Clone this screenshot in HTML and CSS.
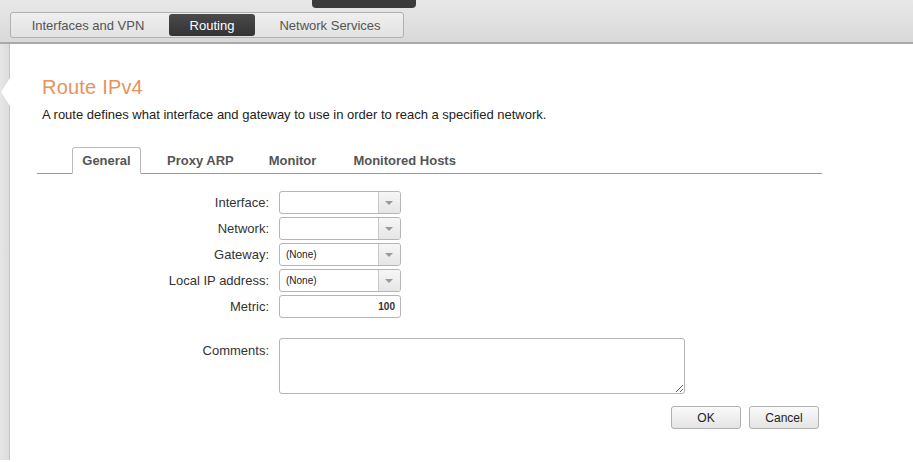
FILE: index.html
```html
<!DOCTYPE html>
<html lang="en">
<head>
    <meta charset="UTF-8">
    <title>Route IPv4</title>
    <link rel="stylesheet" href="styles.css">
</head>
<body>
    <div class="topbar">
        <div class="topbar-tab"></div>
        <div class="segments">
            <div class="segment">Interfaces and VPN</div>
            <div class="segment active">Routing</div>
            <div class="segment">Network Services</div>
        </div>
    </div>

    <div class="main">
        <div class="sidebar">
            <div class="pointer"></div>
        </div>

        <div class="content">
            <h1 class="title">Route IPv4</h1>
            <p class="desc">A route defines what interface and gateway to use in order to reach a specified network.</p>

            <div class="tabs">
                <div class="tab selected">General</div>
                <div class="tab">Proxy ARP</div>
                <div class="tab">Monitor</div>
                <div class="tab">Monitored Hosts</div>
            </div>

            <form class="form">
                <div class="row">
                    <label>Interface:</label>
                    <div class="combo"><span class="combo-value"></span><span class="combo-btn"></span></div>
                </div>
                <div class="row">
                    <label>Network:</label>
                    <div class="combo"><span class="combo-value"></span><span class="combo-btn"></span></div>
                </div>
                <div class="row">
                    <label>Gateway:</label>
                    <div class="combo"><span class="combo-value">(None)</span><span class="combo-btn"></span></div>
                </div>
                <div class="row">
                    <label>Local IP address:</label>
                    <div class="combo"><span class="combo-value">(None)</span><span class="combo-btn"></span></div>
                </div>
                <div class="row">
                    <label>Metric:</label>
                    <input class="field" type="text" value="100">
                </div>
                <div class="row comments">
                    <label>Comments:</label>
                    <textarea class="textarea"></textarea>
                </div>

                <div class="actions">
                    <button type="button" class="button">OK</button>
                    <button type="button" class="button">Cancel</button>
                </div>
            </form>
        </div>
    </div>
</body>
</html>
```

FILE: styles.css
```css
body {
    font-family: "Liberation Sans", Arial, sans-serif;
    margin: 0;
    padding: 0;
    background-color: #fff;
    color: #222;
    font-size: 13px;
}

.topbar {
    position: relative;
    height: 44px;
    background: linear-gradient(#e8e8e8, #d9d9d9);
    border-bottom: 2px solid #a9a9a9;
    padding: 12px 0 0 10px;
    box-sizing: border-box;
}

.topbar-tab {
    position: absolute;
    left: 312px;
    top: 0;
    width: 104px;
    height: 8px;
    background-color: #3b3b3b;
    border-radius: 0 0 4px 4px;
}

.segments {
    display: flex;
    width: 394px;
    height: 26px;
    box-sizing: border-box;
    border: 1px solid #b0b0b0;
    border-radius: 3px;
    background: linear-gradient(#efefef, #e2e2e2);
    padding: 1px 0;
}

.segment {
    display: flex;
    align-items: center;
    justify-content: center;
    font-size: 13px;
    color: #555;
}

.segment:first-child {
    width: 158px;
    padding-right: 4px;
    box-sizing: border-box;
}

.segment.active {
    width: 86px;
    background: linear-gradient(#4a4a4a, #333);
    color: #fff;
    border-radius: 3px;
}

.segment:last-child {
    width: 148px;
    padding-left: 2px;
    box-sizing: border-box;
}

.main {
    display: flex;
    height: 416px;
}

.sidebar {
    position: relative;
    width: 9px;
    background: linear-gradient(90deg, #e6e6e6, #dcdcdc);
    border-right: 1px solid #c4c4c4;
}

.pointer {
    position: absolute;
    top: 34px;
    right: -1px;
    width: 0;
    height: 0;
    border-top: 14px solid transparent;
    border-bottom: 14px solid transparent;
    border-right: 9px solid #fff;
}

.content {
    flex: 1;
    padding: 0 0 0 27px;
}

.title {
    margin: 32px 0 0 5px;
    font-size: 20px;
    font-weight: normal;
    color: #ea925a;
    letter-spacing: 0.2px;
}

.desc {
    margin: 8px 0 0 5px;
    font-size: 13px;
    color: #222;
}

.tabs {
    display: flex;
    width: 785px;
    height: 27px;
    margin-top: 25px;
    border-bottom: 1px solid #999;
    padding-left: 35px;
    box-sizing: border-box;
}

.tab {
    display: flex;
    align-items: center;
    font-size: 13px;
    font-weight: bold;
    color: #555;
    padding: 0 17px;
}

.tab.selected {
    width: 69px;
    padding: 0;
    box-sizing: border-box;
    border: 1px solid #bbb;
    border-bottom: 1px solid #fff;
    border-radius: 3px 3px 0 0;
    margin-bottom: -1px;
    background-color: #fff;
    justify-content: center;
    margin-right: 9px;
}

.tab:nth-child(3) {
    padding: 0 20px 0 18px;
}

.form {
    margin-top: 17px;
}

.row {
    display: flex;
    align-items: center;
    height: 23px;
    margin-bottom: 3px;
}

.row label {
    width: 242px;
    text-align: right;
    padding-right: 10px;
    box-sizing: border-box;
    color: #333;
}

.combo {
    display: flex;
    width: 122px;
    height: 23px;
    box-sizing: border-box;
    border: 1px solid #b5b5b5;
    border-radius: 3px;
    background-color: #fff;
}

.combo-value {
    flex: 1;
    font-size: 10px;
    color: #222;
    padding-left: 6px;
    line-height: 21px;
}

.combo-btn {
    position: relative;
    width: 21px;
    border-left: 1px solid #c8c8c8;
    background: linear-gradient(#f6f6f6, #e6e6e6);
    border-radius: 0 2px 2px 0;
}

.combo-btn::after {
    content: "";
    position: absolute;
    left: 6px;
    top: 9px;
    border-left: 4px solid transparent;
    border-right: 4px solid transparent;
    border-top: 4px solid #999;
}

.field {
    width: 122px;
    height: 23px;
    box-sizing: border-box;
    border: 1px solid #b5b5b5;
    border-radius: 3px;
    text-align: right;
    font-family: inherit;
    font-size: 10px;
    font-weight: bold;
    color: #333;
    padding: 0 5px;
}

.row.comments {
    align-items: flex-start;
    height: 56px;
    margin-top: 20px;
}

.row.comments label {
    padding-top: 5px;
}

.textarea {
    width: 406px;
    height: 56px;
    box-sizing: border-box;
    border: 1px solid #b5b5b5;
    border-radius: 3px;
    resize: both;
    font-family: inherit;
}

.actions {
    display: flex;
    gap: 8px;
    width: 782px;
    justify-content: flex-end;
    margin-top: 12px;
}

.button {
    width: 70px;
    height: 23px;
    border: 1px solid #b0b0b0;
    border-radius: 3px;
    background: linear-gradient(#fafafa, #e4e4e4);
    font-family: inherit;
    font-size: 12px;
    color: #222;
    cursor: pointer;
}
```
